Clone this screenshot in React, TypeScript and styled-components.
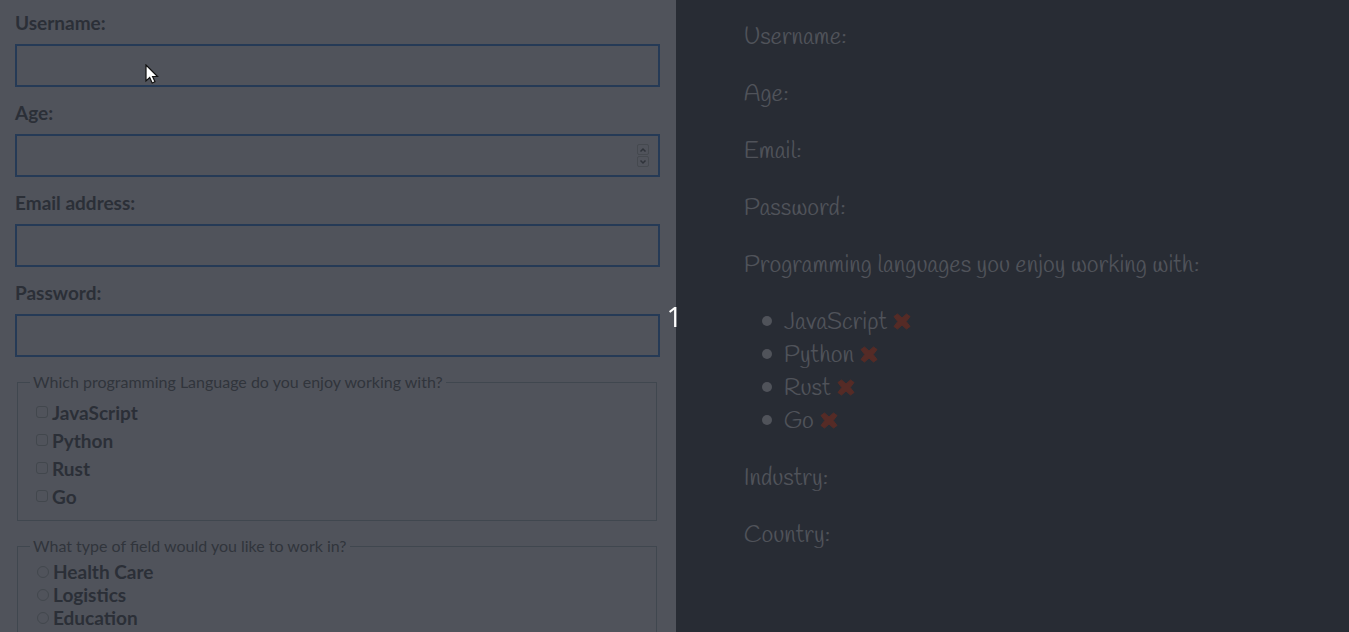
import React from "react";
import styled, { createGlobalStyle } from "styled-components";

const GlobalStyle = createGlobalStyle`
  *, *::before, *::after { box-sizing: border-box; }
  body { margin: 0; background: #282c34; }
`;

const Page = styled.div`
  display: grid;
  grid-template-columns: 50.1% 1fr;
  height: 100vh;
  overflow: hidden;
  font-family: Lato, sans-serif;
`;

const FormPanel = styled.form`
  padding: 8px 16px 0 15px;
  background: #50535b;
  color: #2b2f37;
`;

const Field = styled.div`
  display: flex;
  flex-direction: column;
  height: 90px;
`;

const FieldLabel = styled.label`
  height: 36px;
  font-size: 19px;
  font-weight: 700;
  line-height: 30px;
`;

const Control = styled.div`
  position: relative;
  height: 43px;
`;

const TextInput = styled.input`
  display: block;
  width: 100%;
  height: 100%;
  padding: 8px 16px;
  border: 2px solid #253a56;
  border-radius: 0;
  outline: none;
  background: transparent;
  color: inherit;
  font: 19px Lato, sans-serif;
  appearance: textfield;

  &::-webkit-inner-spin-button,
  &::-webkit-outer-spin-button {
    appearance: none;
    margin: 0;
  }
`;

const Stepper = styled.div`
  position: absolute;
  top: 10px;
  right: 11px;
  display: grid;
  gap: 1px;
`;

const StepButton = styled.button`
  display: grid;
  place-items: center;
  width: 12px;
  height: 11px;
  padding: 0;
  border: 1px solid #45494f;
  border-radius: 2px;
  background: transparent;
  color: #2f333a;
`;

const Group = styled.fieldset<{ $top: number }>`
  margin: 4px 3px 15px 2px;
  padding: ${(p) => p.$top}px 12px 10px;
  border: 1px solid #40474f;
`;

const Legend = styled.legend`
  padding: 0 3px;
  color: #31353c;
  font-size: 16px;
  line-height: 20px;
`;

const Choice = styled.label<{ $height: number; $indent: number }>`
  display: flex;
  align-items: center;
  gap: 4px;
  height: ${(p) => p.$height}px;
  padding-left: ${(p) => p.$indent}px;
  font-size: 19px;
  font-weight: 700;
`;

const Tick = styled.input`
  appearance: none;
  width: 12px;
  height: 12px;
  margin: 0;
  border: 1px solid #42474d;
  border-radius: ${(p) => (p.type === "radio" ? "50%" : "3px")};

  &:checked { background: #2b2f37; }
`;

const Preview = styled.section`
  padding: 22px 68px;
  background: #282c34;
  color: #50535a;
  font-family: Handlee, Lato, sans-serif;
  font-size: 24px;
  line-height: 33px;
`;

const Line = styled.p`
  margin: 0 0 24px;
`;

const Languages = styled.ul`
  margin: 0 0 24px;
  padding-left: 18px;
  list-style: none;
`;

const Language = styled.li`
  &::before {
    content: "";
    display: inline-block;
    width: 10px;
    height: 10px;
    margin-right: 12px;
    border-radius: 50%;
    background: currentColor;
    vertical-align: 3px;
  }
`;

const Cross = styled.svg`
  width: 18px;
  height: 17px;
  margin-left: 6px;
  vertical-align: -1px;
`;

const Countdown = styled.div`
  position: fixed;
  inset: 0;
  display: grid;
  place-items: center;
  color: #fff;
  font: 28px/38px "Open Sans", sans-serif;
  pointer-events: none;
`;

const Pointer = styled.svg`
  position: absolute;
  left: 130px;
  top: 20px;
  width: 14px;
  height: 20px;
  pointer-events: none;
`;

const languages = ["JavaScript", "Python", "Rust", "Go"];
const industries = ["Health Care", "Logistics", "Education"];

export default function App() {
  return (
    <Page>
      <GlobalStyle />
      <FormPanel>
        <Field>
          <FieldLabel htmlFor="username">Username:</FieldLabel>
          <Control>
            <TextInput id="username" type="text" />
            <Pointer viewBox="0 0 14 20" aria-hidden="true">
              <path
                d="M1 1V17L4.7 13.6L7.2 19L10 17.7L7.6 12.5H12.5Z"
                fill="#fff"
                stroke="#111"
                strokeWidth="1.2"
              />
            </Pointer>
          </Control>
        </Field>
        <Field>
          <FieldLabel htmlFor="age">Age:</FieldLabel>
          <Control>
            <TextInput id="age" type="number" />
            <Stepper>
              <StepButton type="button" aria-label="Increase age">
                <svg width="8" height="6" viewBox="0 0 8 6" fill="none" stroke="currentColor" strokeWidth="1.5">
                  <path d="M1.5 4.5L4 2L6.5 4.5" />
                </svg>
              </StepButton>
              <StepButton type="button" aria-label="Decrease age">
                <svg width="8" height="6" viewBox="0 0 8 6" fill="none" stroke="currentColor" strokeWidth="1.5">
                  <path d="M1.5 1.5L4 4L6.5 1.5" />
                </svg>
              </StepButton>
            </Stepper>
          </Control>
        </Field>
        <Field>
          <FieldLabel htmlFor="email">Email address:</FieldLabel>
          <Control>
            <TextInput id="email" type="email" />
          </Control>
        </Field>
        <Field>
          <FieldLabel htmlFor="password">Password:</FieldLabel>
          <Control>
            <TextInput id="password" type="password" />
          </Control>
        </Field>
        <Group $top={6}>
          <Legend>Which programming Language do you enjoy working with?</Legend>
          {languages.map((name) => (
            <Choice key={name} $height={28} $indent={6}>
              <Tick type="checkbox" name="languages" value={name} />
              {name}
            </Choice>
          ))}
        </Group>
        <Group $top={4}>
          <Legend>What type of field would you like to work in?</Legend>
          {industries.map((name) => (
            <Choice key={name} $height={23} $indent={7}>
              <Tick type="radio" name="industry" value={name} />
              {name}
            </Choice>
          ))}
        </Group>
      </FormPanel>
      <Preview>
        <Line>Username:</Line>
        <Line>Age:</Line>
        <Line>Email:</Line>
        <Line>Password:</Line>
        <Line>Programming languages you enjoy working with:</Line>
        <Languages>
          {languages.map((name) => (
            <Language key={name}>
              {name}
              <Cross viewBox="0 0 18 17" role="img" aria-label="not selected">
                <path
                  d="M1 3.5L4.5 1L9 5L13.5 1L17 3.5L13.2 8.5L17 13.5L13.5 16L9 12L4.5 16L1 13.5L4.8 8.5Z"
                  fill="#552b26"
                  stroke="#552b26"
                  strokeLinejoin="round"
                />
              </Cross>
            </Language>
          ))}
        </Languages>
        <Line>Industry:</Line>
        <Line>Country:</Line>
      </Preview>
      <Countdown>1</Countdown>
    </Page>
  );
}
